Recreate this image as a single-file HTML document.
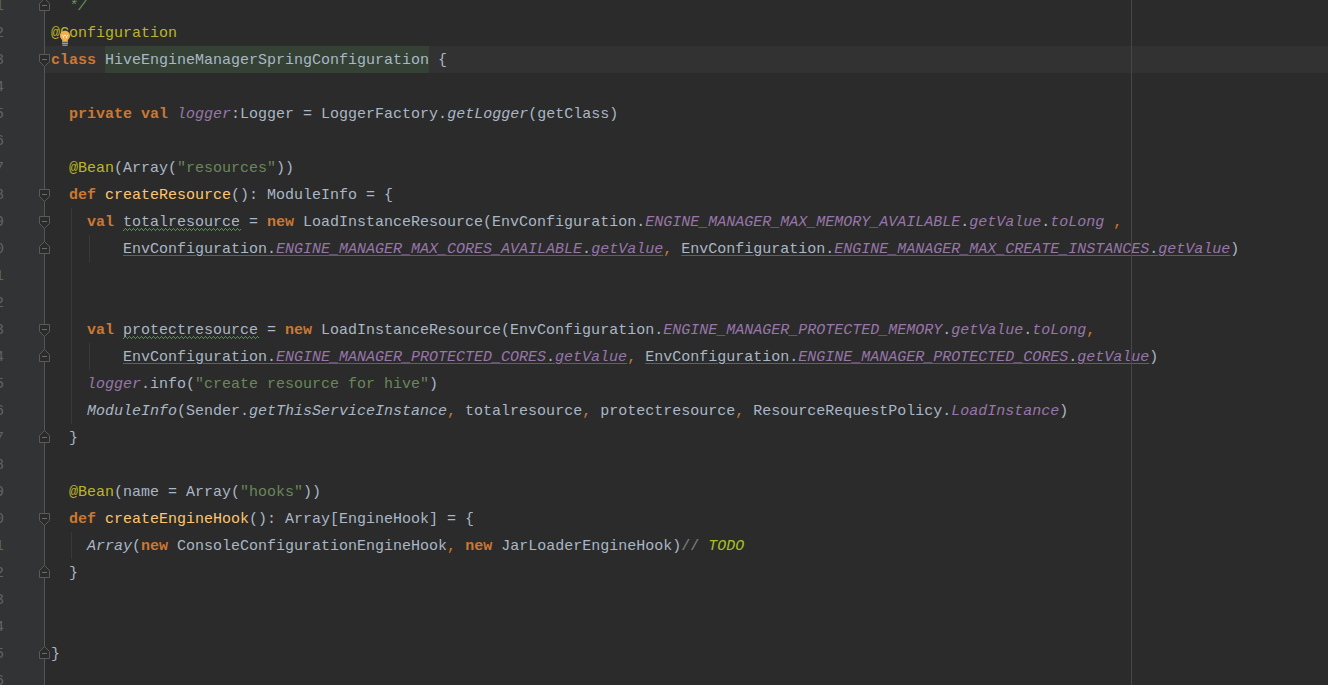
<!DOCTYPE html>
<html><head><meta charset="utf-8">
<style>
html,body{margin:0;padding:0;width:1328px;height:685px;overflow:hidden;background:#2B2B2B;}
body{position:relative;font-family:"Liberation Mono",monospace;font-size:15px;color:#A9B7C6;}
#gutter{position:absolute;left:0;top:0;width:44px;height:685px;background:#313335;}
#foldline{position:absolute;left:44px;top:0;width:1px;height:685px;background:#555555;}
#margin{position:absolute;left:1131px;top:0;width:1px;height:685px;background:#474747;}
.caret{position:absolute;left:45px;top:46px;width:1283px;height:27px;background:#323232;}
.r{position:absolute;left:51px;height:27px;line-height:27px;white-space:pre;padding-top:1px;}
.ln{position:absolute;left:-20px;width:24px;text-align:right;height:27px;line-height:27px;color:#606366;white-space:pre;padding-top:1px;}
.k{color:#CC7832;font-weight:bold;}
.c{color:#CC7832;}
.a{color:#BBB529;}
.s{color:#6A8759;}
.f{color:#FFC66D;}
.p{color:#9876AA;font-style:italic;}
.i{font-style:italic;}
.dc{color:#629755;font-style:italic;}
.cm{color:#808080;}
.todo{color:#A8C023;font-style:italic;}
.hl{background:#344134;display:inline-block;height:27px;vertical-align:top;position:relative;top:-1px;padding-top:1px;box-sizing:border-box;}
.u{text-decoration:underline;text-decoration-color:#606060;text-underline-offset:2px;}
.guide{position:absolute;width:1px;background:#393939;}
.fo{fill:#2B2B2B;stroke:#5A5A5A;stroke-width:1;}
.fmn{fill:#6A6A6A;}
</style></head><body>
<div id="gutter"></div>
<div class="caret"></div>

<!-- line numbers (cut off) -->
<div class="ln" style="top:-8px">1</div>
<div class="ln" style="top:19px">2</div>
<div class="ln" style="top:46px">3</div>
<div class="ln" style="top:73px">4</div>
<div class="ln" style="top:100px">5</div>
<div class="ln" style="top:127px">6</div>
<div class="ln" style="top:154px">7</div>
<div class="ln" style="top:181px">8</div>
<div class="ln" style="top:208px">9</div>
<div class="ln" style="top:235px">0</div>
<div class="ln" style="top:262px">1</div>
<div class="ln" style="top:289px">2</div>
<div class="ln" style="top:316px">3</div>
<div class="ln" style="top:343px">4</div>
<div class="ln" style="top:370px">5</div>
<div class="ln" style="top:397px">6</div>
<div class="ln" style="top:424px">7</div>
<div class="ln" style="top:451px">8</div>
<div class="ln" style="top:478px">9</div>
<div class="ln" style="top:505px">0</div>
<div class="ln" style="top:532px">1</div>
<div class="ln" style="top:559px">2</div>
<div class="ln" style="top:586px">3</div>
<div class="ln" style="top:613px">4</div>
<div class="ln" style="top:640px">5</div>
<div class="ln" style="top:667px">6</div>

<div id="foldline"></div>

<svg id="ov" width="1328" height="685" viewBox="0 0 1328 685" style="position:absolute;left:0;top:0;">
<defs><pattern id="wv" x="123" y="0" width="4" height="685" patternUnits="userSpaceOnUse"><rect x="0" y="230" width="1" height="1" fill="#5E8F5A"/><rect x="1" y="229" width="1" height="1" fill="#5E8F5A"/><rect x="2" y="228" width="1" height="1" fill="#5E8F5A"/><rect x="3" y="229" width="1" height="1" fill="#5E8F5A"/><rect x="0" y="338" width="1" height="1" fill="#5E8F5A"/><rect x="1" y="337" width="1" height="1" fill="#5E8F5A"/><rect x="2" y="336" width="1" height="1" fill="#5E8F5A"/><rect x="3" y="337" width="1" height="1" fill="#5E8F5A"/></pattern></defs>
<rect x="123" y="228" width="118" height="3" fill="url(#wv)"/>
<rect x="123" y="336" width="136" height="3" fill="url(#wv)"/>
<polygon points="39.5,54.5 49.5,54.5 49.5,61.5 44.5,66.5 39.5,61.5" class="fo"/><rect x="42" y="59" width="5" height="1" class="fmn"/>
<polygon points="39.5,189.5 49.5,189.5 49.5,196.5 44.5,201.5 39.5,196.5" class="fo"/><rect x="42" y="194" width="5" height="1" class="fmn"/>
<polygon points="39.5,216.5 49.5,216.5 49.5,223.5 44.5,228.5 39.5,223.5" class="fo"/><rect x="42" y="221" width="5" height="1" class="fmn"/>
<polygon points="39.5,324.5 49.5,324.5 49.5,331.5 44.5,336.5 39.5,331.5" class="fo"/><rect x="42" y="329" width="5" height="1" class="fmn"/>
<polygon points="39.5,513.5 49.5,513.5 49.5,520.5 44.5,525.5 39.5,520.5" class="fo"/><rect x="42" y="518" width="5" height="1" class="fmn"/>
<polygon points="39.5,10.5 49.5,10.5 49.5,3.5 44.5,-1.5 39.5,3.5" class="fo"/><rect x="42" y="5" width="5" height="1" class="fmn"/>
<polygon points="39.5,253.5 49.5,253.5 49.5,246.5 44.5,241.5 39.5,246.5" class="fo"/><rect x="42" y="248" width="5" height="1" class="fmn"/>
<polygon points="39.5,361.5 49.5,361.5 49.5,354.5 44.5,349.5 39.5,354.5" class="fo"/><rect x="42" y="356" width="5" height="1" class="fmn"/>
<polygon points="39.5,442.5 49.5,442.5 49.5,435.5 44.5,430.5 39.5,435.5" class="fo"/><rect x="42" y="437" width="5" height="1" class="fmn"/>
<polygon points="39.5,577.5 49.5,577.5 49.5,570.5 44.5,565.5 39.5,570.5" class="fo"/><rect x="42" y="572" width="5" height="1" class="fmn"/>
<polygon points="39.5,658.5 49.5,658.5 49.5,651.5 44.5,646.5 39.5,651.5" class="fo"/><rect x="42" y="653" width="5" height="1" class="fmn"/>
</svg>
<!-- indent guides -->
<div class="guide" style="left:71px;top:208px;height:216px"></div>
<div class="guide" style="left:89px;top:235px;height:27px"></div>
<div class="guide" style="left:89px;top:343px;height:27px"></div>
<div class="guide" style="left:71px;top:532px;height:27px"></div>

<!-- code rows -->
<div class="r" style="top:-8px"><span class="dc">  */</span></div>
<div class="r" style="top:19px"><span class="a">@Configuration</span></div>
<div class="r" style="top:46px"><span class="k">class</span> <span class="hl">HiveEngineManagerSpringConfiguration</span> {</div>
<div class="r" style="top:100px">  <span class="k">private val</span> <span class="p">logger</span>:Logger = LoggerFactory.<span class="i">getLogger</span>(getClass)</div>
<div class="r" style="top:154px">  <span class="a">@Bean</span>(Array(<span class="s">"resources"</span>))</div>
<div class="r" style="top:181px">  <span class="k">def</span> <span class="f">createResource</span>(): ModuleInfo = {</div>
<div class="r" style="top:208px">    <span class="k">val</span> totalresource = <span class="k">new</span> LoadInstanceResource(EnvConfiguration.<span class="p">ENGINE_MANAGER_MAX_MEMORY_AVAILABLE</span>.<span class="p">getValue</span>.<span class="p">toLong</span> <span class="c">,</span></div>
<div class="r" style="top:235px">        <span class="u">EnvConfiguration.<span class="p">ENGINE_MANAGER_MAX_CORES_AVAILABLE</span>.<span class="p">getValue</span></span><span class="c">,</span> <span class="u">EnvConfiguration.<span class="p">ENGINE_MANAGER_MAX_CREATE_INSTANCES</span>.<span class="p">getValue</span></span>)</div>
<div class="r" style="top:316px">    <span class="k">val</span> protectresource = <span class="k">new</span> LoadInstanceResource(EnvConfiguration.<span class="p">ENGINE_MANAGER_PROTECTED_MEMORY</span>.<span class="p">getValue</span>.<span class="p">toLong</span><span class="c">,</span></div>
<div class="r" style="top:343px">        <span class="u">EnvConfiguration.<span class="p">ENGINE_MANAGER_PROTECTED_CORES</span>.<span class="p">getValue</span></span><span class="c">,</span> <span class="u">EnvConfiguration.<span class="p">ENGINE_MANAGER_PROTECTED_CORES</span>.<span class="p">getValue</span></span>)</div>
<div class="r" style="top:370px">    <span class="p">logger</span>.info(<span class="s">"create resource for hive"</span>)</div>
<div class="r" style="top:397px">    <span class="i">ModuleInfo</span>(Sender.<span class="i">getThisServiceInstance</span><span class="c">,</span> totalresource<span class="c">,</span> protectresource<span class="c">,</span> ResourceRequestPolicy.<span class="p">LoadInstance</span>)</div>
<div class="r" style="top:424px">  }</div>
<div class="r" style="top:478px">  <span class="a">@Bean</span>(name = Array(<span class="s">"hooks"</span>))</div>
<div class="r" style="top:505px">  <span class="k">def</span> <span class="f">createEngineHook</span>(): Array[EngineHook] = {</div>
<div class="r" style="top:532px">    <span class="i">Array</span>(<span class="k">new</span> ConsoleConfigurationEngineHook<span class="c">,</span> <span class="k">new</span> JarLoaderEngineHook)<span class="cm">// </span><span class="todo">TODO</span></div>
<div class="r" style="top:559px">  }</div>
<div class="r" style="top:640px">}</div>

<div id="margin"></div>
<svg width="1328" height="685" viewBox="0 0 1328 685" style="position:absolute;left:0;top:0;">
<path d="M65,30.8 C67.9,30.8 70,33 70,35.8 C70,37.6 69,38.6 68.2,39.6 C67.7,40.3 67.6,40.8 67.6,41.2 L62.4,41.2 C62.4,40.8 62.3,40.3 61.8,39.6 C61,38.6 60,37.6 60,35.8 C60,33 62.1,30.8 65,30.8 Z" fill="#F4AE52"/>
<g fill="#FFF3D6"><rect x="62" y="35" width="1" height="1"/><rect x="64" y="35" width="2" height="1"/><rect x="67" y="35" width="1" height="1"/><rect x="63" y="36" width="1" height="2"/><rect x="66" y="36" width="1" height="2"/></g>
<rect x="62" y="41" width="6" height="1" fill="#9A9A9A"/>
<rect x="62" y="42" width="6" height="1" fill="#5E5E5E"/>
<rect x="62" y="43" width="6" height="1" fill="#9A9A9A"/>
<rect x="62" y="44" width="6" height="1" fill="#5E5E5E"/>
<rect x="62.5" y="45" width="5" height="1" fill="#8A8A8A"/>
</svg>
</body></html>
